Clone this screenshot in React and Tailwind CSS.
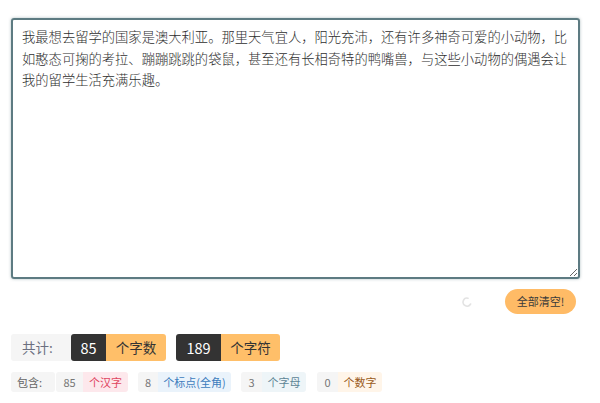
import React from "react";

const text =
  "我最想去留学的国家是澳大利亚。那里天气宜人，阳光充沛，还有许多神奇可爱的小动物，比如憨态可掬的考拉、蹦蹦跳跳的袋鼠，甚至还有长相奇特的鸭嘴兽，与这些小动物的偶遇会让我的留学生活充满乐趣。";

const font = { fontFamily: '"Microsoft YaHei", "Noto Sans CJK SC", "Noto Sans", sans-serif' };

export default function App() {
  return (
    <div className="w-[600px] h-[403px] overflow-hidden bg-white" style={font}>
      <div className="pl-[11px] pr-[20px] pt-[18px]">
        <textarea
          defaultValue={text}
          className="block w-[569px] h-[261px] resize border-2 border-[#5d7b82] rounded-[3px] px-[9px] py-[6px] text-[13.3px] leading-[21.5px] text-[#2e2e2e] font-light outline-none shadow-[0_0_3px_rgba(93,123,130,0.5)]"
          style={font}
        />
        <div className="flex items-center justify-end w-[565px] mt-[10px]">
          <svg width="10" height="10" viewBox="0 0 10 10" className="mr-[33px]">
            <path d="M6 1.2 A4 4 0 1 0 8.6 7" fill="none" stroke="#e3e3e3" strokeWidth="1.6" strokeLinecap="round" />
          </svg>
          <button className="h-[25px] w-[71px] rounded-full bg-[#ffbb66] text-[11px] text-[#3a3a3a] flex items-center justify-center">
            全部清空!
          </button>
        </div>
        <div className="flex items-center mt-[20px] h-[27px] text-[13.5px]">
          <div className="h-full w-[60px] bg-[#f5f5f5] rounded-l-[3px] flex items-center pl-[11px] text-[#6b6f80]">
            共计:
          </div>
          <div className="h-full w-[35px] bg-[#333] rounded-l-[3px] flex items-center justify-center text-white text-[14.5px]">
            85
          </div>
          <div className="h-full w-[60px] bg-[#ffbf69] rounded-r-[3px] flex items-center justify-center text-[#333]">
            个字数
          </div>
          <div className="h-full w-[45px] ml-[10px] bg-[#333] rounded-l-[3px] flex items-center justify-center text-white text-[14.5px]">
            189
          </div>
          <div className="h-full w-[59px] bg-[#ffbf69] rounded-r-[3px] flex items-center justify-center text-[#333]">
            个字符
          </div>
        </div>
        <div className="flex items-center mt-[11px] h-[20px] text-[11px]">
          <div className="h-full w-[44px] bg-[#f5f5f5] rounded-[3px] flex items-center pl-[6px] text-[#666]">
            包含:
          </div>
          <div className="h-full w-[27px] ml-[1px] bg-[#f5f5f5] rounded-l-[3px] flex items-center justify-center text-[#777]">
            85
          </div>
          <div className="h-full w-[45px] bg-[#fde8ec] rounded-r-[3px] flex items-center justify-center text-[#e0455f]">
            个汉字
          </div>
          <div className="h-full w-[20px] ml-[10px] bg-[#f5f5f5] rounded-l-[3px] flex items-center justify-center text-[#777]">
            8
          </div>
          <div className="h-full w-[73px] bg-[#eaf3fb] rounded-r-[3px] flex items-center justify-center text-[#3d7cbd]">
            个标点(全角)
          </div>
          <div className="h-full w-[21px] ml-[10px] bg-[#f5f5f5] rounded-l-[3px] flex items-center justify-center text-[#777]">
            3
          </div>
          <div className="h-full w-[44px] bg-[#eef5f8] rounded-r-[3px] flex items-center justify-center text-[#5d8596]">
            个字母
          </div>
          <div className="h-full w-[21px] ml-[11px] bg-[#f5f5f5] rounded-l-[3px] flex items-center justify-center text-[#777]">
            0
          </div>
          <div className="h-full w-[44px] bg-[#fff5e9] rounded-r-[3px] flex items-center justify-center text-[#9a5a20]">
            个数字
          </div>
        </div>
      </div>
      <div className="mt-[11px] mx-[2px] h-[10px] bg-[#f5f5f5] rounded-[3px]" />
    </div>
  );
}
